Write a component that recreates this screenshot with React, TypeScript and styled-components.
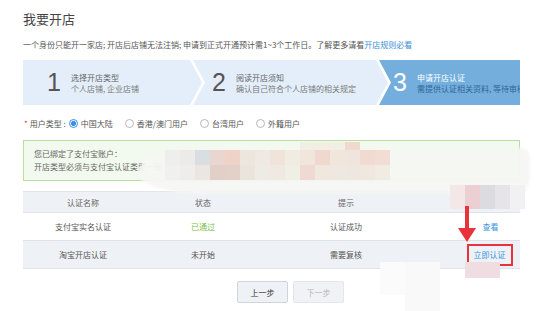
import React from "react";
import styled, { createGlobalStyle } from "styled-components";

const Global = createGlobalStyle`
  html, body { margin: 0; padding: 0; background: #fff; }
  body { font-family: "Noto Sans CJK SC", "Noto Sans", sans-serif; color: #555; }
`;

const Page = styled.div`
  position: relative;
  width: 541px;
  height: 311px;
  overflow: hidden;
  padding: 10px 0 0 23px;
  box-sizing: border-box;
`;

const Main = styled.div`
  width: 497px;
  display: flex;
  flex-direction: column;
`;

const Title = styled.h1`
  margin: 0;
  font-size: 13px;
  line-height: 18px;
  font-weight: 400;
  color: #444;
`;

const Notice = styled.p`
  margin: 11px 0 0;
  font-size: 8px;
  line-height: 12px;
  color: #555;
  white-space: nowrap;
`;

const Link = styled.a`
  color: #3a8fd9;
  text-decoration: none;
`;

const Steps = styled.div`
  margin-top: 9px;
  height: 45px;
  display: flex;
  overflow: hidden;
`;

const Step = styled.div<{ $w?: number; $first?: boolean; $last?: boolean; $active?: boolean; $pad: number }>`
  flex: ${(p) => (p.$w ? `0 0 ${p.$w}px` : "1 1 auto")};
  margin-left: ${(p) => (p.$first ? 0 : -9)}px;
  background: ${(p) => (p.$active ? "#74aedc" : "#e3eefa")};
  clip-path: ${(p) =>
    p.$last
      ? "polygon(0 0, 100% 0, 100% 100%, 0 100%, 12px 50%)"
      : p.$first
      ? "polygon(0 0, calc(100% - 12px) 0, 100% 50%, calc(100% - 12px) 100%, 0 100%)"
      : "polygon(0 0, calc(100% - 12px) 0, 100% 50%, calc(100% - 12px) 100%, 0 100%, 12px 50%)"};
  display: flex;
  align-items: center;
  gap: 10px;
  padding-left: ${(p) => p.$pad}px;
  box-sizing: border-box;
  overflow: hidden;
  white-space: nowrap;
`;

const StepNum = styled.span<{ $active?: boolean }>`
  font-family: "Liberation Sans", Arial, sans-serif;
  font-size: 25px;
  font-weight: 300;
  line-height: 1;
  color: ${(p) => (p.$active ? "#fff" : "#555")};
`;

const StepText = styled.div<{ $active?: boolean }>`
  display: flex;
  flex-direction: column;
  font-size: 8px;
  line-height: 11px;
  color: ${(p) => (p.$active ? "#2f6699" : "#7a7a7a")};
  & > span:first-child {
    color: ${(p) => (p.$active ? "#fff" : "#666")};
  }
`;

const TypeRow = styled.div`
  margin-top: 11px;
  height: 14px;
  display: flex;
  align-items: center;
  font-size: 8px;
  color: #555;
`;

const Star = styled.span`
  color: #e4393c;
  margin: 0 2px 0 1px;
`;

const Radio = styled.label`
  display: flex;
  align-items: center;
  gap: 3px;
  margin-right: 12px;
`;

const Dot = styled.span<{ $on?: boolean }>`
  width: 9px;
  height: 9px;
  border-radius: 50%;
  box-sizing: border-box;
  border: 1px solid ${(p) => (p.$on ? "#3a8ee6" : "#b8b8b8")};
  background: ${(p) => (p.$on ? "radial-gradient(circle, #3a8ee6 0 2.2px, #fff 2.6px)" : "#fff")};
`;

const InfoBox = styled.div`
  margin-top: 10px;
  border: 1px solid #b9dc9f;
  background: #f2f9ee;
  padding: 6px 10px 7px;
  font-size: 8px;
  line-height: 13px;
  color: #666;
`;

const Table = styled.div`
  margin-top: 10px;
  display: flex;
  flex-direction: column;
`;

const Row = styled.div<{ $head?: boolean; $grey?: boolean }>`
  display: grid;
  grid-template-columns: 120px 120px 166px 1fr;
  height: ${(p) => (p.$head ? 22 : 28)}px;
  align-items: center;
  font-size: 8px;
  color: ${(p) => (p.$head ? "#666" : "#555")};
  background: ${(p) => (p.$grey || p.$head ? "#eef1f5" : "#fff")};
  border-top: ${(p) => (p.$head ? "1px solid #e2e6eb" : "none")};
  border-bottom: 1px solid #dfe3e8;
  box-sizing: border-box;
`;

const Cell = styled.div<{ $tone?: "ok" | "link"; $pl?: number }>`
  text-align: center;
  padding-left: ${(p) => p.$pl ?? 0}px;
  color: ${(p) => (p.$tone === "ok" ? "#7dbf4e" : p.$tone === "link" ? "#3b95e0" : "inherit")};
`;

const Highlight = styled.span`
  display: inline-block;
  border: 2px solid #e8333a;
  padding: 3px 5px;
  line-height: 12px;
`;

const Buttons = styled.div`
  margin-top: 12px;
  padding-left: 214px;
  display: flex;
  gap: 5px;
`;

const Button = styled.button<{ $disabled?: boolean }>`
  width: 51px;
  height: 22px;
  border-radius: 2px;
  font-family: inherit;
  font-size: 8px;
  border: 1px solid ${(p) => (p.$disabled ? "#e3e6ea" : "#cfd5dc")};
  background: ${(p) => (p.$disabled ? "#f0f2f5" : "#eef1f5")};
  color: ${(p) => (p.$disabled ? "#b3b9c0" : "#333")};
  padding: 0;
`;

const Blob = styled.div`
  position: absolute;
  left: 138px;
  top: 148px;
  width: 392px;
  height: 46px;
  background: #f6f7f4;
  opacity: 0.96;
  border-radius: 60px 10px 14px 80px / 30px 10px 20px 24px;
  filter: blur(1.5px);
`;

const Tile = styled.div<{ $x: number; $y: number; $c: string; $w?: number; $h?: number }>`
  position: absolute;
  left: ${(p) => p.$x}px;
  top: ${(p) => p.$y}px;
  width: ${(p) => p.$w ?? 15}px;
  height: ${(p) => p.$h ?? 15}px;
  background: ${(p) => p.$c};
`;

const Arrow = styled.svg`
  position: absolute;
  left: 458px;
  top: 206px;
`;

const tiles: [number, number, string, number?, number?][] = [
  [165, 150, "#eeeeec"], [180, 150, "#ecebe8"], [195, 150, "#d9dee2"], [210, 150, "#e9d6d0"],
  [225, 150, "#efd2c8"], [240, 150, "#ede6df"], [255, 150, "#eee9e2"], [270, 150, "#f0e3da"],
  [285, 150, "#f1ece2"], [300, 150, "#f0e6dc"], [315, 150, "#f1d8ce"], [330, 150, "#f1e6dc"],
  [345, 150, "#f0e5dc"], [360, 150, "#f1dbd1"], [375, 150, "#f1ddd3"],
  [165, 165, "#f0f0ee"], [180, 165, "#efedea"], [195, 165, "#ebe6e1"], [210, 165, "#e2d0c8"],
  [225, 165, "#e3d0c8"], [240, 165, "#ebe4dd"], [255, 165, "#eeeae4"], [270, 165, "#efe9e1"],
  [285, 165, "#f0efe6"], [300, 165, "#f0d9d1"], [315, 165, "#f0e8df"], [330, 165, "#efe8e0"],
  [345, 165, "#eee7df"], [360, 165, "#f0e7de"], [375, 165, "#f0ece4"],
  [345, 142, "#f0dad0", 15, 8], [300, 142, "#f2eee6", 45, 8],
  [450, 185, "#f3e7e8", 15, 24], [465, 185, "#eccfd2", 15, 24], [480, 185, "#dcdce0", 15, 24],
  [495, 185, "#e6e4e9", 15, 24], [510, 185, "#f1f1f3", 15, 24],
  [380, 262, "#fbfbfb", 30, 33], [405, 262, "#f9f9f9", 35, 49], [465, 262, "#efdde2", 35, 16],
];

export default function App() {
  return (
    <>
      <Global />
      <Page>
        <Main>
          <Title>我要开店</Title>
          <Notice>
            一个身份只能开一家店; 开店后店铺无法注销; 申请到正式开通预计需1~3个工作日。了解更多请看
            <Link>开店规则必看</Link>
          </Notice>
          <Steps>
            <Step $first $w={179} $pad={24}>
              <StepNum>1</StepNum>
              <StepText>
                <span>选择开店类型</span>
                <span>个人店铺, 企业店铺</span>
              </StepText>
            </Step>
            <Step $w={195} $pad={19}>
              <StepNum>2</StepNum>
              <StepText>
                <span>阅读开店须知</span>
                <span>确认自己符合个人店铺的相关规定</span>
              </StepText>
            </Step>
            <Step $last $active $pad={14}>
              <StepNum $active>3</StepNum>
              <StepText $active>
                <span>申请开店认证</span>
                <span>需提供认证相关资料, 等待审核</span>
              </StepText>
            </Step>
          </Steps>
          <TypeRow>
            <Star>*</Star>
            <span style={{ marginRight: 3 }}>用户类型 :</span>
            <Radio><Dot $on />中国大陆</Radio>
            <Radio><Dot />香港/澳门用户</Radio>
            <Radio><Dot />台湾用户</Radio>
            <Radio><Dot />外籍用户</Radio>
          </TypeRow>
          <InfoBox>
            <div>您已绑定了支付宝账户：</div>
            <div>开店类型必须与支付宝认证类型一致</div>
          </InfoBox>
          <Table>
            <Row $head>
              <Cell>认证名称</Cell>
              <Cell>状态</Cell>
              <Cell>提示</Cell>
              <Cell $pl={32}>操作</Cell>
            </Row>
            <Row>
              <Cell>支付宝实名认证</Cell>
              <Cell $tone="ok">已通过</Cell>
              <Cell>认证成功</Cell>
              <Cell $tone="link" $pl={32}>查看</Cell>
            </Row>
            <Row $grey>
              <Cell>淘宝开店认证</Cell>
              <Cell>未开始</Cell>
              <Cell>需要复核</Cell>
              <Cell $tone="link" $pl={30}>
                <Highlight>立即认证</Highlight>
              </Cell>
            </Row>
          </Table>
          <Buttons>
            <Button>上一步</Button>
            <Button $disabled>下一步</Button>
          </Buttons>
        </Main>
        <Blob />
        {tiles.map(([x, y, c, w, h], i) => (
          <Tile key={i} $x={x} $y={y} $c={c} $w={w} $h={h} />
        ))}
        <Arrow width="18" height="37" viewBox="0 0 18 37">
          <rect x="7" y="0" width="4" height="23" fill="#e8333a" />
          <polygon points="0,22 18,22 9,36" fill="#e8333a" />
        </Arrow>
      </Page>
    </>
  );
}
